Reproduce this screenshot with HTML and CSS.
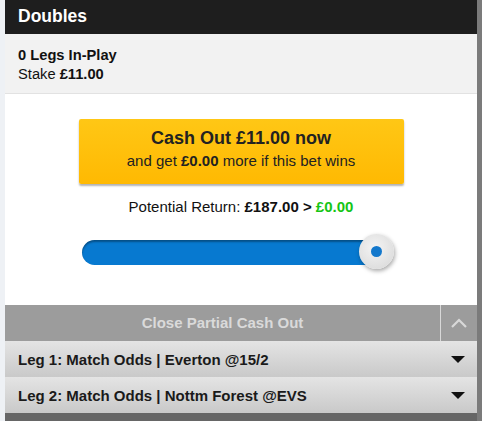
FILE: index.html
```html
<!DOCTYPE html>
<html>
<head>
<meta charset="utf-8">
<link rel="stylesheet" href="styles.css">
</head>
<body>
<div class="page">
  <div class="gutter"></div>
  <div class="panel">
    <div class="header">Doubles</div>
    <div class="info">
      <div class="legs">0 Legs In-Play</div>
      <div class="stake">Stake <b>£11.00</b></div>
    </div>
    <div class="body">
      <div class="cashout">
        <div class="co-main">Cash Out £11.00 now</div>
        <div class="co-sub">and get <b>£0.00</b> more if this bet wins</div>
      </div>
      <div class="potential">Potential Return: <b>£187.00 &gt; <span class="green">£0.00</span></b></div>
      <div class="slider">
        <div class="track"></div>
        <div class="thumb"><div class="dot"></div></div>
      </div>
    </div>
    <div class="closebar">
      <div class="close-label">Close Partial Cash Out</div>
      <div class="close-toggle">
        <svg width="18" height="12" viewBox="0 0 18 12"><path d="M2 10 L9 3 L16 10" fill="none" stroke="#d8d8d8" stroke-width="2.2"/></svg>
      </div>
    </div>
    <div class="leg"><span>Leg 1: Match Odds | Everton @15/2</span><span class="tri"></span></div>
    <div class="leg"><span>Leg 2: Match Odds | Nottm Forest @EVS</span><span class="tri"></span></div>
    <div class="footer"></div>
  </div>
  <div class="scroll"></div>
</div>
</body>
</html>
```
FILE: styles.css
```css
html, body { margin: 0; padding: 0; }
body { font-family: "Liberation Sans", Arial, sans-serif; background: #eef1f5; }
.page { display: flex; width: 482px; height: 421px; overflow: hidden; }
.gutter { width: 5px; background: #eef1f5; flex: none; }
.scroll { width: 5px; background: #7b7b7b; flex: none; }
.panel { flex: 1; display: flex; flex-direction: column; background: #fff; }
.header { height: 34px; background: #1e1e1e; color: #fff; font-weight: bold; font-size: 17.5px; padding-left: 13px; line-height: 32px; box-sizing: border-box; }
.info { height: 60px; background: #f2f2f2; border-bottom: 1px solid #e2e2e2; box-sizing: border-box; padding: 12px 13px 0; font-size: 14.7px; color: #111; line-height: 19px; }
.legs { font-weight: bold; }
.body { height: 211px; display: flex; flex-direction: column; align-items: center; }
.cashout { margin-top: 25px; width: 325px; height: 65px; box-sizing: border-box; border-radius: 2px; background: linear-gradient(#ffc715, #ffb902); box-shadow: 0 2px 2px rgba(0,0,0,0.3); text-align: center; color: #222; padding-top: 9px; }
.co-main { font-size: 18px; font-weight: bold; line-height: 21px; }
.co-sub { font-size: 15px; line-height: 18px; margin-top: 3px; }
.potential { font-size: 15px; color: #111; margin-top: 14px; line-height: 17px; }
.green { color: #16c516; }
.slider { position: relative; align-self: flex-start; margin-left: 77px; width: 320px; height: 40px; margin-top: 15px; }
.track { position: absolute; left: 0; top: 10px; width: 298px; height: 25px; border-radius: 13px; background: #0779d0; box-shadow: inset 0 2px 2px rgba(0,0,0,0.35); }
.thumb { position: absolute; left: 277px; top: 4px; width: 35px; height: 35px; border-radius: 50%; background: radial-gradient(circle at 45% 40%, #f4f4f4, #d6d6d6); box-shadow: 1px 2px 4px rgba(0,0,0,0.35); display: flex; align-items: center; justify-content: center; }
.dot { width: 11px; height: 11px; border-radius: 50%; background: #1378cc; margin-left: -1px; }
.closebar { height: 36px; display: flex; background: #9c9c9c; }
.close-label { flex: 1; text-align: center; color: #dadada; font-weight: bold; font-size: 15px; line-height: 36px; border-right: 1px solid #d8d8d8; }
.close-toggle { width: 36px; display: flex; align-items: center; justify-content: center; }
.leg { height: 36px; display: flex; align-items: center; justify-content: space-between; padding: 0 12px 0 13px; background: linear-gradient(#e4e4e4, #c9c9c9); font-weight: bold; font-size: 15px; color: #1a1a1a; box-sizing: border-box; }
.tri { width: 0; height: 0; border-left: 7px solid transparent; border-right: 7px solid transparent; border-top: 7px solid #111; margin-top: 1px; }
.footer { flex: 1; background: #666; }
```
